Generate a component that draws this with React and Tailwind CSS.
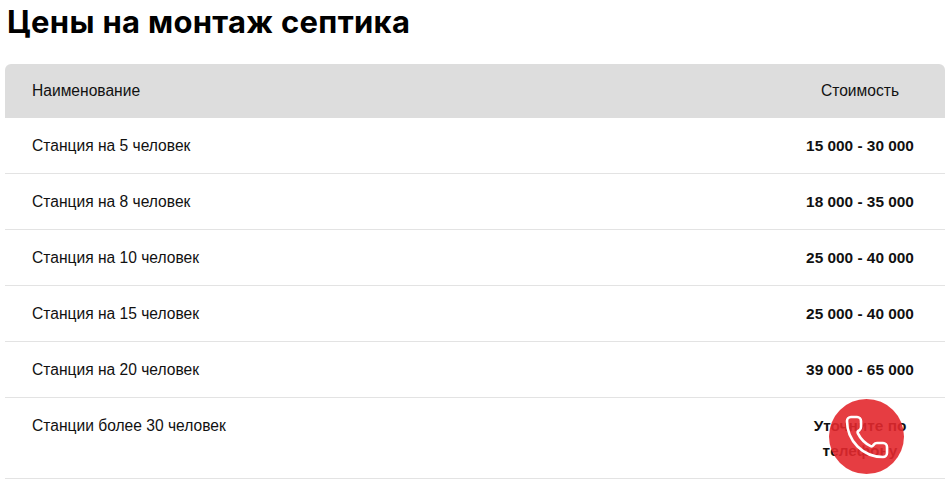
import { Phone } from 'lucide-react';

const rows = [
    { name: 'Станция на 5 человек', price: '15 000 - 30 000' },
    { name: 'Станция на 8 человек', price: '18 000 - 35 000' },
    { name: 'Станция на 10 человек', price: '25 000 - 40 000' },
    { name: 'Станция на 15 человек', price: '25 000 - 40 000' },
    { name: 'Станция на 20 человек', price: '39 000 - 65 000' },
    { name: 'Станции более 30 человек', price: 'Уточните по телефону' },
];

const App = () => {
    return (
        <div className="min-h-[484px] bg-white text-[#111]" style={{ fontFamily: '"Liberation Sans", Arial, sans-serif' }}>
            <h1
                className="pl-[7px] pt-[4px] text-[31px] font-bold leading-[36px] tracking-[0.3px] text-black"
                style={{ fontFamily: 'Inter, "Noto Sans", sans-serif' }}
            >
                Цены на монтаж септика
            </h1>

            <div className="ml-[5px] mt-[24px] w-[940px]">
                <table className="w-full border-collapse text-[15.6px] leading-[25px]">
                    <thead>
                        <tr className="bg-[#dddddd]">
                            <th className="rounded-tl-[6px] pb-[15px] pl-[27px] pt-[14px] text-left font-normal">Наименование</th>
                            <th className="box-content w-[110px] rounded-tr-[6px] pb-[15px] pr-[30px] pt-[14px] text-center font-normal">
                                Стоимость
                            </th>
                        </tr>
                    </thead>
                    <tbody>
                        {rows.map((r, idx) => (
                            <tr key={idx} className="border-b border-[#e3e3e3]">
                                <td className="py-[15px] pl-[27px] align-top">{r.name}</td>
                                <td className="box-content w-[110px] py-[15px] pr-[30px] text-center align-top text-[15.4px] font-bold">
                                    {r.price}
                                </td>
                            </tr>
                        ))}
                    </tbody>
                </table>
            </div>

            {/* call button */}
            <a
                href="#"
                className="fixed bottom-[10px] right-[47px] flex h-[75px] w-[75px] items-center justify-center rounded-full bg-[#e3282d]/90"
            >
                <Phone size={48} strokeWidth={1.3} color="#ffffff" />
            </a>
        </div>
    );
};

export default App;
